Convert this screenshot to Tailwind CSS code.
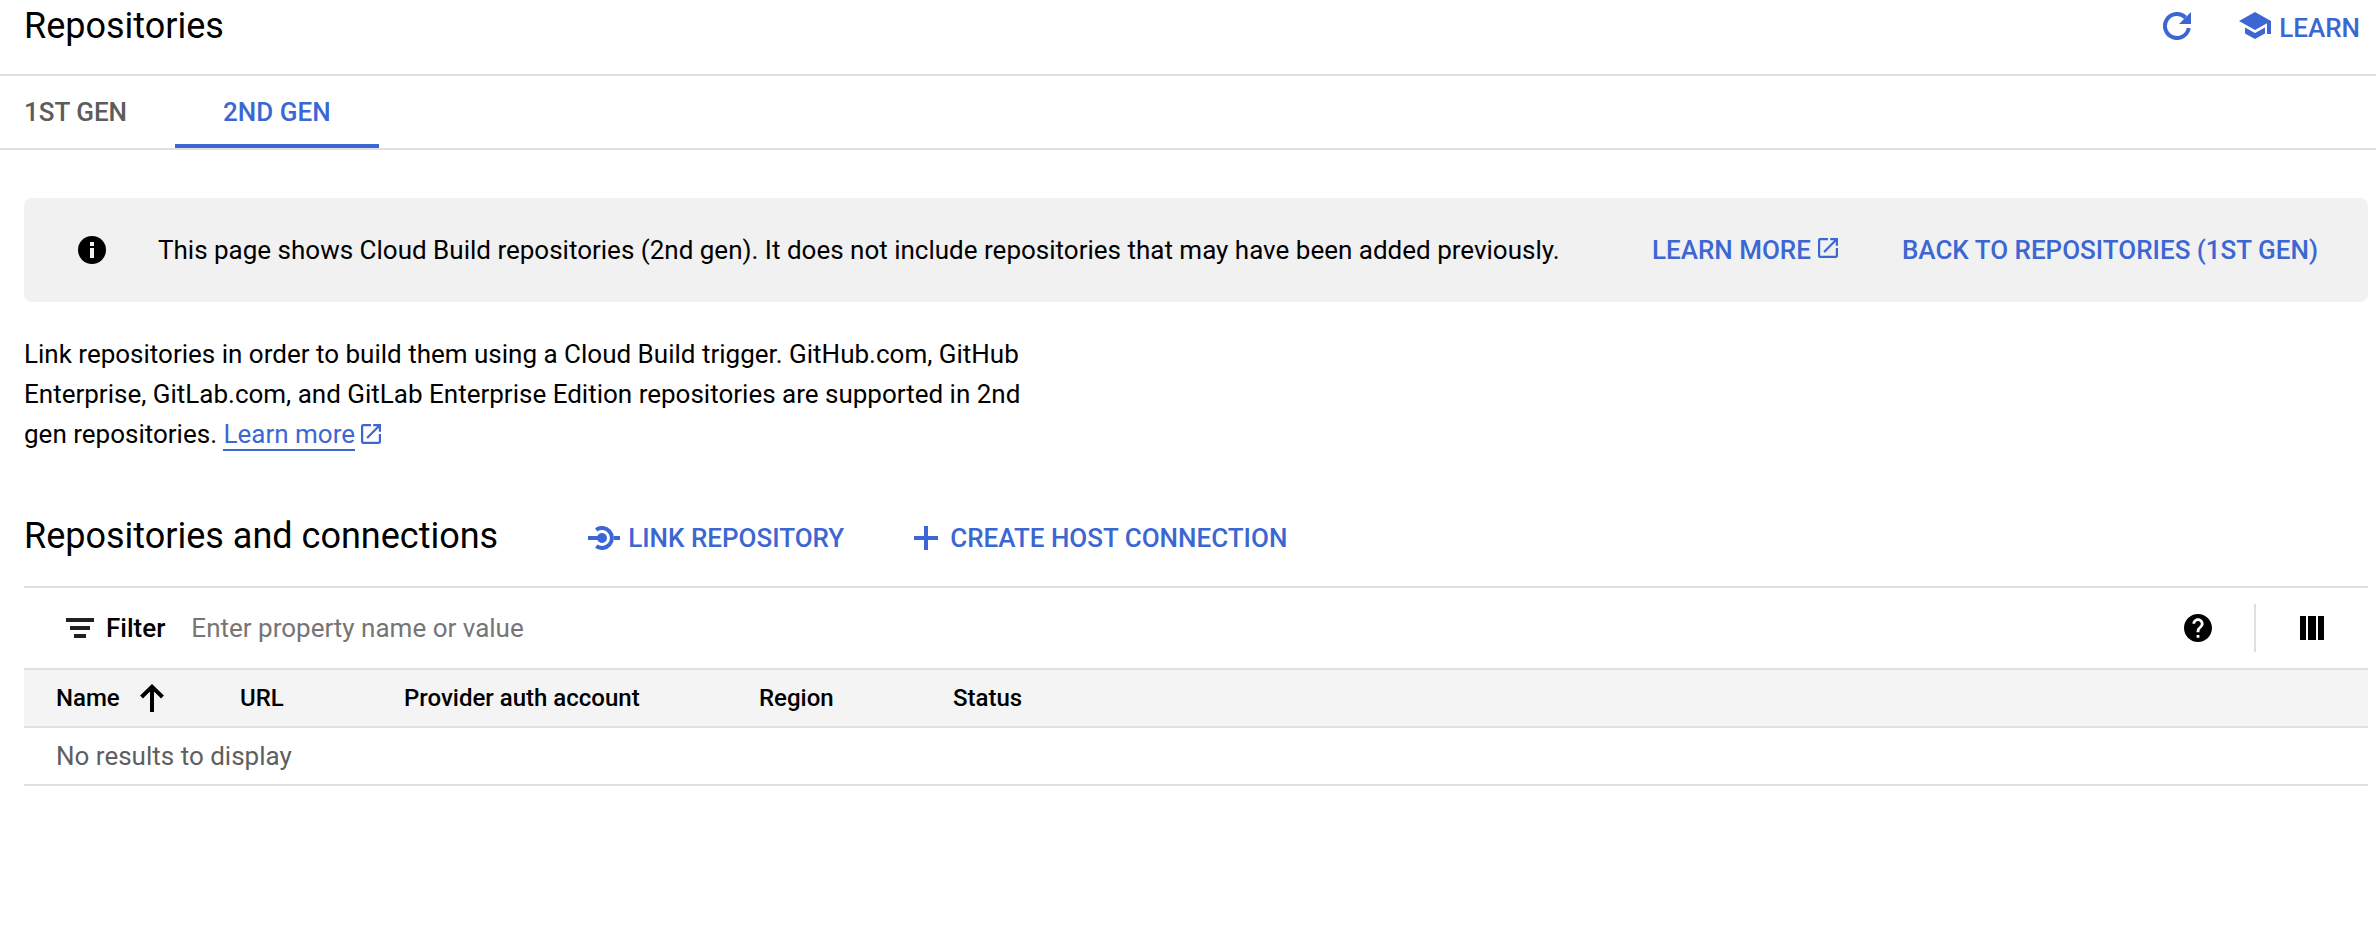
<!DOCTYPE html>
<html lang="en">
<head>
<meta charset="utf-8">
<title>Repositories</title>
<script src="https://cdn.jsdelivr.net/npm/@tailwindcss/browser@4"></script>
</head>
<body class="bg-white font-['Roboto',sans-serif] text-[26px] leading-10 text-black">
<header class="flex h-[76px] items-start justify-between border-b-2 border-[#e0e0e0] pl-6 pr-4">
  <h1 class="pt-1 text-[36px] leading-11">Repositories</h1>
  <div class="flex items-start gap-11 pt-2 text-[#3c67d3]">
    <button type="button" aria-label="Refresh" class="flex h-9 w-9 items-center justify-center">
      <svg class="h-7 w-7" viewBox="0 0 28 28" fill="none"><path d="M22.500 5.500A12 12 0 1 0 25.800 16" stroke="currentColor" stroke-width="4"/><path d="M28 0v12H16z" fill="currentColor"/></svg>
    </button>
    <a href="#" class="flex items-center gap-2 font-medium">
      <svg class="mb-1 h-7 w-8" viewBox="0 0 32 28" fill="currentColor"><path d="M16 0 0 9l16 9 12-6.700V22h4V9zM6 15.500v6L16 27l10-5.500v-6L16 21z"/></svg>
      LEARN
    </a>
  </div>
</header>

<nav class="flex h-[74px] border-b-2 border-[#e0e0e0] font-medium">
  <a href="#" class="flex items-center pl-6 pr-12 text-[#5c5c5c]">1ST GEN</a>
  <a href="#" aria-current="page" class="flex items-center border-b-4 border-[#3c67d3] px-12 pt-1 text-[#3c67d3]">2ND GEN</a>
</nav>

<main class="pl-6 pr-2 pt-12">
  <section class="flex h-26 items-center rounded-lg bg-[#f1f1f1] pl-[54px] pr-[50px]">
    <svg class="mr-[52px] h-7 w-7 shrink-0" viewBox="0 0 28 28"><circle cx="14" cy="14" r="14"/><path d="M12 6h4v4h-4zM12 12h4v10h-4z" fill="#f1f1f1"/></svg>
    <p class="flex-1">This page shows Cloud Build repositories (2nd gen). It does not include repositories that may have been added previously.</p>
    <div class="flex items-center gap-16 font-medium text-[#3c67d3]">
      <a href="#" class="flex items-center gap-[7px]">LEARN MORE
        <svg class="mb-1 h-5 w-5" viewBox="3 3 18 18" fill="currentColor"><path d="M19 19H5V5h7V3H5a2 2 0 0 0-2 2v14a2 2 0 0 0 2 2h14c1.100 0 2-.9 2-2v-7h-2v7zM14 3v2h3.590l-9.830 9.830 1.410 1.410L19 6.410V10h2V3h-7z"/></svg>
      </a>
      <a href="#">BACK TO REPOSITORIES (1ST GEN)</a>
    </div>
  </section>

  <p class="mt-8 max-w-[1020px]">Link repositories in order to build them using a Cloud Build trigger. GitHub.com, GitHub Enterprise, GitLab.com, and GitLab Enterprise Edition repositories are supported in 2nd gen repositories. <a href="#" class="border-b-2 border-[#3c67d3] text-[#3c67d3]">Learn more</a><svg class="mb-1 ml-[6px] inline h-5 w-5" viewBox="3 3 18 18" fill="#3c67d3"><path d="M19 19H5V5h7V3H5a2 2 0 0 0-2 2v14a2 2 0 0 0 2 2h14c1.100 0 2-.9 2-2v-7h-2v7zM14 3v2h3.590l-9.830 9.830 1.410 1.410L19 6.410V10h2V3h-7z"/></svg></p>

  <div class="flex h-33 items-center pt-8">
    <h2 class="text-[36px]">Repositories and connections</h2>
    <div class="ml-[90px] flex items-center gap-[70px] pt-1 font-medium text-[#3c67d3]">
      <button type="button" class="flex items-center gap-2">
        <svg class="h-6 w-8" viewBox="0 0 32 24" fill="none" stroke="currentColor" stroke-width="4"><path d="M0 12h12M26 12h6"/><circle cx="14" cy="12" r="5" fill="currentColor" stroke="none"/><path d="M8.200 3.800A10 10 0 1 1 8.200 20.200"/></svg>
        LINK REPOSITORY
      </button>
      <button type="button" class="flex items-center gap-3">
        <svg class="h-6 w-6" viewBox="0 0 24 24" stroke="currentColor" stroke-width="4"><path d="M0 12h24M12 0v24"/></svg>
        CREATE HOST CONNECTION
      </button>
    </div>
  </div>

  <div class="flex h-[84px] items-center border-y-2 border-[#e0e0e0] pl-[42px] pr-11">
    <svg class="h-5 w-7" viewBox="0 0 28 20" fill="#212121"><path d="M0 0h28v4H0zM4 8h20v4H4zM8 16h12v4H8z"/></svg>
    <label for="filter" class="ml-3 font-medium">Filter</label>
    <input id="filter" type="text" placeholder="Enter property name or value" class="ml-[26px] min-w-0 flex-1 outline-none placeholder:text-[#757575]">
    <button type="button" aria-label="Help" class="mr-[42px]">
      <svg class="h-7 w-7" viewBox="2 2 20 20"><path d="M12 2C6.480 2 2 6.480 2 12s4.480 10 10 10 10-4.480 10-10S17.520 2 12 2zm1 17h-2v-2h2v2zm2.070-7.750-.9.920C13.450 12.900 13 13.500 13 15h-2v-.5c0-1.100.45-2.100 1.170-2.830l1.240-1.260c.37-.36.59-.86.59-1.410 0-1.100-.9-2-2-2s-2 .9-2 2H8c0-2.210 1.790-4 4-4s4 1.790 4 4c0 .88-.36 1.680-.93 2.250z"/></svg>
    </button>
    <div class="h-12 w-[2px] bg-[#e0e0e0]"></div>
    <button type="button" aria-label="Column display options" class="ml-11">
      <svg class="h-6 w-6" viewBox="0 0 24 24"><path d="M0 0h6v24H0zM8 0h8v24H8zM18 0h6v24h-6z"/></svg>
    </button>
  </div>

  <table class="w-full table-fixed border-separate border-spacing-0 text-left">
    <colgroup><col class="w-[184px]"><col class="w-[164px]"><col class="w-[355px]"><col class="w-[194px]"><col></colgroup>
    <thead class="bg-[#f4f4f4] text-2xl">
      <tr class="h-[58px]">
        <th class="border-b-2 border-[#e0e0e0] p-0 pl-8 font-medium" aria-sort="ascending"><button type="button" class="flex items-center gap-5">Name
          <svg class="h-7 w-6" viewBox="0 0 24 28" fill="none" stroke="currentColor" stroke-width="4"><path d="M12 28V2M1.500 13 12 2.800 22.500 13"/></svg></button></th>
        <th class="border-b-2 border-[#e0e0e0] p-0 pl-8 font-medium">URL</th>
        <th class="border-b-2 border-[#e0e0e0] p-0 pl-8 font-medium">Provider auth account</th>
        <th class="border-b-2 border-[#e0e0e0] p-0 pl-8 font-medium">Region</th>
        <th class="border-b-2 border-[#e0e0e0] p-0 pl-8 font-medium">Status</th>
      </tr>
    </thead>
    <tbody>
      <tr class="h-[58px]"><td colspan="5" class="border-b-2 border-[#e0e0e0] p-0 pl-8 text-[#5f5f5f]">No results to display</td></tr>
    </tbody>
  </table>
</main>
</body>
</html>
